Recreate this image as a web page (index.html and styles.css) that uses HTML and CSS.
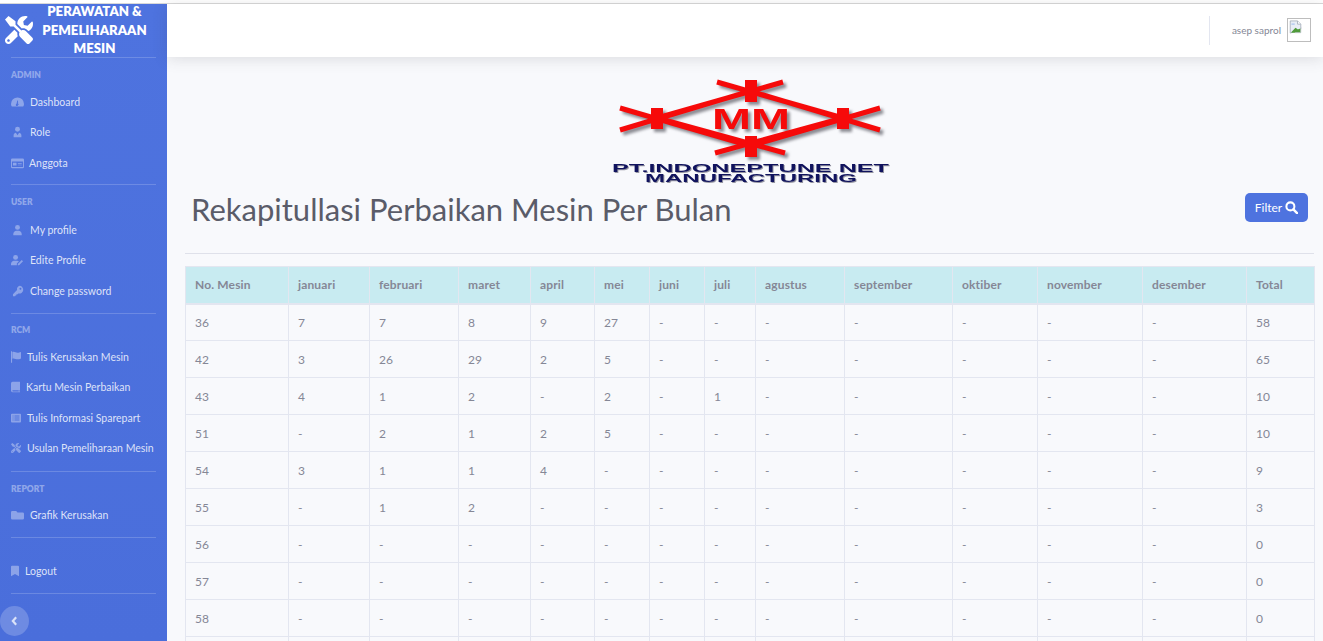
FILE: index.html
```html
<!DOCTYPE html>
<html lang="id">
<head>
<meta charset="utf-8">
<title>Rekapitulasi</title>
<link rel="stylesheet" href="styles.css">
</head>
<body>
<div class="strip"></div>
<div class="wrapper">
  <aside class="sidebar">
    <div class="brand">
      <svg class="brand-icon" viewBox="0 0 512 512"><path fill="#fff" d="M501.1 395.7L384 278.6c-23.1-23.1-57.6-27.6-85.4-13.9L192 158.1V96L64 0 0 64l96 128h62.1l106.6 106.600c-13.600 27.800-9.200 62.300 13.900 85.400l117.100 117.100c14.600 14.600 38.200 14.600 52.700 0l52.700-52.700c14.500-14.600 14.500-38.200 0-52.700zM331.700 225c28.300 0 54.900 11 74.900 31l19.400 19.400c15.800-6.900 30.800-16.500 43.800-29.500 37.100-37.100 49.700-89.300 37.900-136.700-2.200-9-13.500-12.100-20.100-5.500l-74.400 74.400-67.900-11.300L334 98.900l74.400-74.400c6.600-6.600 3.400-17.900-5.700-20.200-47.400-11.700-99.600.9-136.600 37.900-28.500 28.500-41.900 66.100-41.200 103.600l82.100 82.100c8.100-1.900 16.500-2.900 24.700-2.900zm-103.900 82l-56.700-56.700L18.700 402.800c-25 25-25 65.500 0 90.500s65.500 25 90.500 0l123.600-123.600c-7.600-19.900-9.900-41.600-5-62.700zM64 472c-13.200 0-24-10.800-24-24 0-13.300 10.700-24 24-24s24 10.700 24 24c0 13.200-10.700 24-24 24z"/></svg>
      <div class="brand-text">PERAWATAN &amp; PEMELIHARAAN MESIN</div>
    </div>
    <hr class="divider brand-divider">
    <div class="heading">ADMIN</div>
    <a class="nav"><svg class="ico ico-a" viewBox="0 0 20 16"><path d="M10 1a10 10 0 0 0-10 10c0 1.700.5 3 1.300 4h17.400c.8-1 1.300-2.300 1.300-4A10 10 0 0 0 10 1zm1 11.500a1.800 1.800 0 1 1-2.500-1.700l1.200-5.300h1l.3 5.400c.6.300 1 .9 1 1.600z"/></svg><span>Dashboard</span></a>
    <a class="nav"><svg class="ico ico-a" viewBox="0 0 20 16"><circle cx="10" cy="3.800" r="3.800"/><path d="M4 16v-3c0-2.500 2-4 3.500-4l2.500 4 2.500-4c1.500 0 3.500 1.500 3.500 4v3z"/></svg><span>Role</span></a>
    <a class="nav"><svg class="ico ico-b" viewBox="0 0 20 16"><path fill-rule="evenodd" d="M2 1h16a2 2 0 0 1 2 2v11a2 2 0 0 1-2 2H2a2 2 0 0 1-2-2V3a2 2 0 0 1 2-2zM1.500 5.500v8.500h17V5.500zM3 7.500h5.500v4.500H3zM10.500 8h6v1h-6zM10.500 10.500h6v1h-6z"/></svg><span>Anggota</span></a>
    <hr class="divider after-admin">
    <div class="heading heading-user">USER</div>
    <a class="nav"><svg class="ico ico-a" viewBox="0 0 20 16"><circle cx="10" cy="4" r="3.800"/><path d="M3.500 16v-2C3.500 11 6 9 8 9h4c2 0 4.500 2 4.500 5v2z"/></svg><span>My profile</span></a>
    <a class="nav"><svg class="ico ico-a" viewBox="0 0 20 16"><circle cx="7" cy="4" r="3.800"/><path d="M0 16v-2c0-3 2.500-5 4.500-5h5c1 0 2 .4 2.700 1L9 13.500V16zM10.500 16v-2l6-6 2 2-6 6z"/></svg><span>Edite Profile</span></a>
    <a class="nav"><svg class="ico ico-a" viewBox="0 0 20 16"><path fill-rule="evenodd" d="M13 0a6 6 0 1 1-1.700 11.800L9.500 13.500H8V15H6.500v1H3v-3l6.300-6.400A6 6 0 0 1 13 0zm1.500 3a1.500 1.500 0 1 0 0 3 1.500 1.500 0 0 0 0-3z"/></svg><span>Change password</span></a>
    <hr class="divider after-user">
    <div class="heading heading-rcm">RCM</div>
    <a class="nav"><svg class="ico ico-c" viewBox="0 0 14 16"><path d="M0 0h1.500v16H0zM2 1c3-1 4.500 1 7 1 2 0 3-.5 5-1v9c-2 1-3.500 1.300-5 1.300-2.500 0-4-1.800-7-1z"/></svg><span>Tulis Kerusakan Mesin</span></a>
    <a class="nav"><svg class="ico ico-d" viewBox="0 0 14 16"><path fill-rule="evenodd" d="M2.500 0H14v13h-1v2h1v1H2.500A2.500 2.500 0 0 1 0 13.500v-11A2.500 2.500 0 0 1 2.500 0zM3 13a1 1 0 0 0 0 2h9v-2z"/></svg><span>Kartu Mesin Perbaikan</span></a>
    <a class="nav"><svg class="ico ico-e" viewBox="0 0 16 16"><path fill-rule="evenodd" d="M1.500 1h13A1.500 1.500 0 0 1 16 2.500v11a1.500 1.500 0 0 1-1.500 1.500h-13A1.500 1.500 0 0 1 0 13.500v-11A1.500 1.500 0 0 1 1.500 1zM2.500 4v1.500H4V4zm3 0v1.500h8V4zm-3 3.200v1.500H4V7.200zm3 0v1.500h8V7.200zm-3 3.300V12H4v-1.500zm3 0V12h8v-1.500z"/></svg><span>Tulis Informasi Sparepart</span></a>
    <a class="nav"><svg class="ico ico-e" viewBox="0 0 512 512"><path d="M501.1 395.7L384 278.6c-23.1-23.1-57.6-27.6-85.4-13.9L192 158.1V96L64 0 0 64l96 128h62.1l106.6 106.600c-13.600 27.800-9.200 62.300 13.900 85.400l117.100 117.100c14.600 14.600 38.200 14.600 52.700 0l52.700-52.700c14.500-14.600 14.500-38.200 0-52.700zM331.700 225c28.300 0 54.900 11 74.900 31l19.400 19.400c15.800-6.900 30.800-16.500 43.800-29.500 37.100-37.100 49.700-89.300 37.900-136.700-2.200-9-13.500-12.100-20.100-5.500l-74.400 74.400-67.900-11.300L334 98.900l74.400-74.400c6.600-6.600 3.400-17.900-5.700-20.200-47.400-11.700-99.600.9-136.600 37.900-28.500 28.500-41.900 66.100-41.200 103.600l82.100 82.100c8.100-1.900 16.500-2.900 24.700-2.900zm-103.900 82l-56.700-56.700L18.700 402.800c-25 25-25 65.500 0 90.500s65.500 25 90.500 0l123.600-123.600c-7.600-19.900-9.900-41.600-5-62.700zM64 472c-13.200 0-24-10.800-24-24 0-13.300 10.700-24 24-24s24 10.700 24 24c0 13.200-10.700 24-24 24z"/></svg><span>Usulan Pemeliharaan Mesin</span></a>
    <hr class="divider after-rcm">
    <div class="heading heading-report">REPORT</div>
    <a class="nav"><svg class="ico ico-a" viewBox="0 0 20 16"><path d="M2 2h6l2 2.200h8a2 2 0 0 1 2 2V13a2 2 0 0 1-2 2H2a2 2 0 0 1-2-2V4a2 2 0 0 1 2-2z"/></svg><span>Grafik Kerusakan</span></a>
    <hr class="divider after-report">
    <a class="nav nav-logout"><svg class="ico ico-f" viewBox="0 0 12 16"><path d="M0 1.500A1.500 1.500 0 0 1 1.500 0h9A1.500 1.500 0 0 1 12 1.500V16l-6-3.500L0 16z"/></svg><span>Logout</span></a>
    <hr class="divider after-logout">
    <button class="toggle" type="button" aria-label="Tutup"><svg viewBox="0 0 8 12"><path d="M6 1.500 2 6l4 4.500" fill="none" stroke="currentColor" stroke-width="2.600"/></svg></button>
  </aside>
  <main class="content">
    <header class="topbar">
      <div class="user">
        <span class="user-name">asep saprol</span>
        <span class="avatar"><svg class="broken" viewBox="0 0 16 16"><path d="M1.500.5h9l4 4v6l-13 5z" fill="#e8edf6" stroke="#a3abb8"/><path d="M10.500.5v4h4" fill="#fff" stroke="#a3abb8"/><path d="M3 3.500h4v2H3z" fill="#b8cdf0"/><path d="M3 14l5-5 3 2 3.500-1.500v5.500H3z" fill="#4f9a3a"/><path d="M14.500 8v7h-7" fill="none" stroke="#c3c8d0"/></svg></span>
      </div>
    </header>
    <div class="page">
      <div class="logo-row">
        <svg class="logo" viewBox="0 0 300 120">
          <g class="logo-art">
            <path class="logo-line" d="M20 38 150 76 280 38M20 60 150 21 280 60M117 12 243 48M183 12 57 48M115 83 243 48M185 83 57 48"/>
            <path class="logo-node" d="M57 38v21M151 10v22M243 38v21M151 66v21"/>
            <text class="logo-mm" x="151" y="59" text-anchor="middle" textLength="78" lengthAdjust="spacingAndGlyphs">MM</text>
          </g>
          <g class="logo-name">
            <text class="logo-t1" x="150.500" y="102" text-anchor="middle" textLength="277" lengthAdjust="spacingAndGlyphs">PT.INDONEPTUNE NET</text>
            <text class="logo-t2" x="151" y="112" text-anchor="middle" textLength="212" lengthAdjust="spacingAndGlyphs">MANUFACTURING</text>
          </g>
        </svg>
      </div>
      <div class="title-row">
        <h1>Rekapitullasi Perbaikan Mesin Per Bulan</h1>
        <button class="filter" type="button">Filter <svg viewBox="0 0 14 14"><circle cx="5.800" cy="5.800" r="4.300" fill="none" stroke="currentColor" stroke-width="2.200"/><path d="M9 9l4 4" stroke="currentColor" stroke-width="2.600" stroke-linecap="round"/></svg></button>
      </div>
      <hr class="rule">
      <table>
        <colgroup>
          <col class="c1"><col class="c2"><col class="c3"><col class="c4"><col class="c5"><col class="c6"><col class="c7"><col class="c8"><col class="c9"><col class="c10"><col class="c11"><col class="c12"><col class="c13"><col class="c14">
        </colgroup>
        <thead>
          <tr><th>No. Mesin</th><th>januari</th><th>februari</th><th>maret</th><th>april</th><th>mei</th><th>juni</th><th>juli</th><th>agustus</th><th>september</th><th>oktiber</th><th>november</th><th>desember</th><th>Total</th></tr>
        </thead>
        <tbody>
          <tr><td>36</td><td>7</td><td>7</td><td>8</td><td>9</td><td>27</td><td>-</td><td>-</td><td>-</td><td>-</td><td>-</td><td>-</td><td>-</td><td>58</td></tr>
          <tr><td>42</td><td>3</td><td>26</td><td>29</td><td>2</td><td>5</td><td>-</td><td>-</td><td>-</td><td>-</td><td>-</td><td>-</td><td>-</td><td>65</td></tr>
          <tr><td>43</td><td>4</td><td>1</td><td>2</td><td>-</td><td>2</td><td>-</td><td>1</td><td>-</td><td>-</td><td>-</td><td>-</td><td>-</td><td>10</td></tr>
          <tr><td>51</td><td>-</td><td>2</td><td>1</td><td>2</td><td>5</td><td>-</td><td>-</td><td>-</td><td>-</td><td>-</td><td>-</td><td>-</td><td>10</td></tr>
          <tr><td>54</td><td>3</td><td>1</td><td>1</td><td>4</td><td>-</td><td>-</td><td>-</td><td>-</td><td>-</td><td>-</td><td>-</td><td>-</td><td>9</td></tr>
          <tr><td>55</td><td>-</td><td>1</td><td>2</td><td>-</td><td>-</td><td>-</td><td>-</td><td>-</td><td>-</td><td>-</td><td>-</td><td>-</td><td>3</td></tr>
          <tr><td>56</td><td>-</td><td>-</td><td>-</td><td>-</td><td>-</td><td>-</td><td>-</td><td>-</td><td>-</td><td>-</td><td>-</td><td>-</td><td>0</td></tr>
          <tr><td>57</td><td>-</td><td>-</td><td>-</td><td>-</td><td>-</td><td>-</td><td>-</td><td>-</td><td>-</td><td>-</td><td>-</td><td>-</td><td>0</td></tr>
          <tr><td>58</td><td>-</td><td>-</td><td>-</td><td>-</td><td>-</td><td>-</td><td>-</td><td>-</td><td>-</td><td>-</td><td>-</td><td>-</td><td>0</td></tr>
          <tr><td></td><td></td><td></td><td></td><td></td><td></td><td></td><td></td><td></td><td></td><td></td><td></td><td></td><td></td></tr>
        </tbody>
      </table>
    </div>
  </main>
</div>
</body>
</html>
```
FILE: styles.css
```css
* { box-sizing: border-box; }
html, body { margin: 0; height: 100%; overflow: hidden; }
body { font-family: "Lato", "Open Sans", sans-serif; background: #f8f9fc; color: #858796; }
.strip { height: 4px; background: #fff; border-bottom: 1px solid #d9d9d9; }
.wrapper { display: flex; height: 637px; }
.sidebar { position: relative; width: 167px; flex: none; background: #4e73df; background-image: linear-gradient(180deg, #4e73df 0%, #4a6edb 100%); color: #fff; overflow: hidden; padding: 0 11px; }
.brand { display: flex; align-items: center; height: 53px; margin-left: -6px; padding-bottom: 1px; }
.brand-icon { width: 28px; height: 28px; flex: none; }
.brand-text { flex: 1; text-align: center; font-size: 13.200px; line-height: 18.500px; font-weight: 800; }
.divider { border: 0; border-top: 1px solid rgba(255,255,255,.18); margin: 0; }
.brand-divider { margin-bottom: 12px; }
.heading { font-size: 8.500px; line-height: 11px; font-weight: 800; color: rgba(255,255,255,.4); margin-bottom: 6px; }
.heading-user { margin-top: 12px; margin-bottom: 7px; }
.heading-rcm { margin-top: 11px; margin-bottom: 6px; }
.heading-report { margin-top: 12px; margin-bottom: 5px; }
.nav { display: flex; align-items: center; height: 30.300px; font-size: 10.500px; color: rgba(255,255,255,.82); white-space: nowrap; }
.ico { fill: rgba(255,255,255,.36); flex: none; height: 12px; }
.ico-a { width: 13px; margin-right: 6px; }
.ico-b { width: 13px; margin-right: 5px; }
.ico-c { width: 10px; margin-right: 6px; }
.ico-d { width: 9px; margin-right: 6px; }
.ico-e { width: 10px; margin-right: 6px; }
.ico-f { width: 8px; margin-right: 6px; }
.after-admin { margin-top: 6px; }
.after-user { margin-top: 7px; }
.after-rcm { margin-top: 8px; }
.after-report { margin-top: 7px; }
.after-logout { margin-top: 6px; }
.nav-logout { margin-top: 18px; }
.toggle { position: absolute; left: 0; bottom: 5px; width: 29px; height: 30px; border: 0; border-radius: 50%; background: rgba(255,255,255,.2); color: rgba(255,255,255,.75); padding: 0; display: flex; align-items: center; justify-content: center; }
.toggle svg { width: 7px; height: 10px; }
.content { flex: 1; min-width: 0; }
.topbar { height: 53px; background: #fff; box-shadow: 0 2px 14px rgba(58,59,69,.15); display: flex; justify-content: flex-end; align-items: center; padding: 0 12px 1px 0; position: relative; }
.user { display: flex; align-items: center; height: 29px; border-left: 1px solid #e3e6f0; padding-left: 22px; }
.user-name { font-size: 10px; margin-right: 6px; color: #858796; }
.avatar { width: 24px; height: 24px; border: 1px solid #bdbdbd; display: block; padding: 1px; }
.broken { display: block; width: 13px; height: 14px; }
.page { padding: 0 9px 0 18px; }
.logo-row { display: flex; justify-content: center; padding-top: 13px; height: 130px; }
.logo { width: 300px; height: 120px; display: block; flex: none; }
.logo-art { filter: drop-shadow(3px 3px 1.500px rgba(50,50,60,.55)); }
.logo-line { fill: none; stroke: #f60a0a; stroke-width: 5; }
.logo-node { fill: none; stroke: #f60a0a; stroke-width: 12; }
.logo-mm { font-family: "Liberation Sans", sans-serif; font-size: 30px; font-weight: 700; fill: #f60a0a; }
.logo-name { filter: drop-shadow(1px 1px .5px rgba(50,50,70,.5)); }
.logo-t1, .logo-t2 { font-family: "Liberation Sans", sans-serif; font-weight: 700; fill: #10135e; font-size: 11px; }
.title-row { display: flex; justify-content: space-between; align-items: flex-start; padding-left: 6px; height: 66px; }
h1 { margin: 0; font-size: 31px; line-height: 44px; font-weight: 400; color: #5a5c69; }
.filter { display: flex; align-items: center; gap: 3px; margin-top: 6px; height: 29px; width: 63px; justify-content: center; border: 0; border-radius: 5px; background: #4e73df; color: #fff; font: inherit; font-size: 12px; padding: 0; margin-right: 6px; }
.filter svg { width: 13px; height: 13px; }
.rule { border: 0; border-top: 1px solid #dfe1ea; margin: 0 0 12px; }
table { width: 1129px; table-layout: fixed; border-collapse: collapse; font-size: 12px; color: #858796; }
th, td { border: 1px solid #e3e6f0; padding: 0 0 0 9px; text-align: left; height: 37px; overflow: hidden; white-space: nowrap; }
thead th { background: #c8ebf1; font-weight: 700; border-bottom-width: 2px; letter-spacing: .15px; }
.c1 { width: 103px; } .c2 { width: 81px; } .c3 { width: 89px; } .c4 { width: 72px; } .c5 { width: 64px; } .c6 { width: 55px; } .c7 { width: 55px; } .c8 { width: 51px; } .c9 { width: 89px; } .c10 { width: 108px; } .c11 { width: 85px; } .c12 { width: 105px; } .c13 { width: 104px; } .c14 { width: 68px; }
```
